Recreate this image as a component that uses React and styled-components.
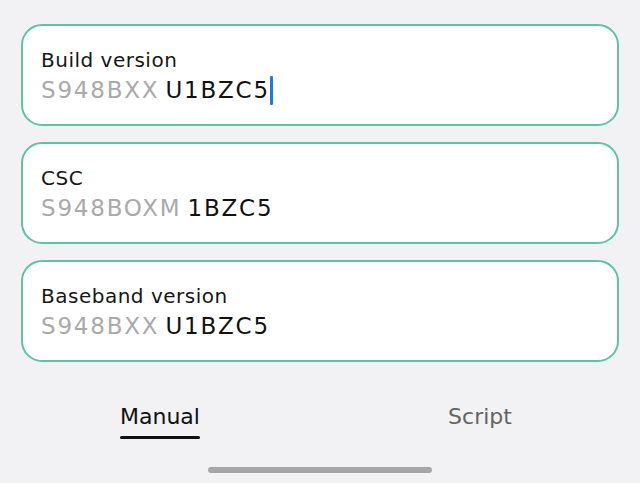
import React, { useState } from 'react';
import styled, { createGlobalStyle } from 'styled-components';

const fields = [
  { id: 'build', label: 'Build version', prefix: 'S948BXX', suffix: 'U1BZC5', focused: true },
  { id: 'csc', label: 'CSC', prefix: 'S948BOXM', suffix: '1BZC5' },
  { id: 'baseband', label: 'Baseband version', prefix: 'S948BXX', suffix: 'U1BZC5' },
];

const tabs = ['Manual', 'Script'];

const App = () => {
  const [activeTab, setActiveTab] = useState('Manual');

  return (
    <>
      <GlobalStyle />
      <Screen>
        <FieldList>
          {fields.map((field) => (
            <FieldCard key={field.id}>
              <FieldLabel>{field.label}</FieldLabel>
              <FieldValue>
                <Prefix>{field.prefix}</Prefix>
                <Suffix>{field.suffix}</Suffix>
                {field.focused && <Caret />}
              </FieldValue>
            </FieldCard>
          ))}
        </FieldList>

        <TabBar>
          {tabs.map((tab) => (
            <Tab key={tab} onClick={() => setActiveTab(tab)}>
              <TabLabel active={activeTab === tab}>
                {tab}
                <Indicator active={activeTab === tab} />
              </TabLabel>
            </Tab>
          ))}
        </TabBar>

        <HomeIndicator />
      </Screen>
    </>
  );
};

export default App;

const GlobalStyle = createGlobalStyle`
  html, body {
    margin: 0;
    padding: 0;
    background: #f2f2f4;
  }
  body {
    font-family: "DejaVu Sans", "Noto Sans", sans-serif;
    -webkit-font-smoothing: antialiased;
  }
`;

const Screen = styled.div`
  width: 640px;
  height: 483px;
  box-sizing: border-box;
  padding: 24px 21px 0;
  display: flex;
  flex-direction: column;
  overflow: hidden;
`;

const FieldList = styled.div`
  display: flex;
  flex-direction: column;
  gap: 16px;
`;

const FieldCard = styled.div`
  height: 102px;
  box-sizing: border-box;
  padding: 20px 18px 18px;
  background: #ffffff;
  border: 2px solid #5cc4a0;
  border-radius: 21px;
  display: flex;
  flex-direction: column;
`;

const FieldLabel = styled.div`
  font-size: 20px;
  line-height: 28px;
  letter-spacing: 0.5px;
  color: #161616;
`;

const FieldValue = styled.div`
  display: flex;
  align-items: center;
  font-size: 23px;
  line-height: 32px;
  letter-spacing: 1.8px;
`;

const Prefix = styled.span`
  color: #a9a9ab;
  margin-right: 6px;
`;

const Suffix = styled.span`
  color: #111111;
`;

const Caret = styled.span`
  display: inline-block;
  width: 3px;
  height: 29px;
  background: #1f7ae0;
  border-radius: 1px;
`;

const TabBar = styled.div`
  display: flex;
  margin: 41px -21px 0;
`;

const Tab = styled.div`
  flex: 1;
  display: flex;
  justify-content: center;
  cursor: pointer;
`;

const TabLabel = styled.div`
  display: flex;
  flex-direction: column;
  align-items: stretch;
  font-size: 22px;
  line-height: 28px;
  color: ${(p) => (p.active ? '#111111' : '#636363')};
`;

const Indicator = styled.div`
  height: 3px;
  margin-top: 5px;
  border-radius: 2px;
  background: ${(p) => (p.active ? '#111111' : 'transparent')};
`;

const HomeIndicator = styled.div`
  align-self: center;
  width: 224px;
  height: 6px;
  margin-top: 28px;
  border-radius: 3px;
  background: #a6a6a8;
`;
